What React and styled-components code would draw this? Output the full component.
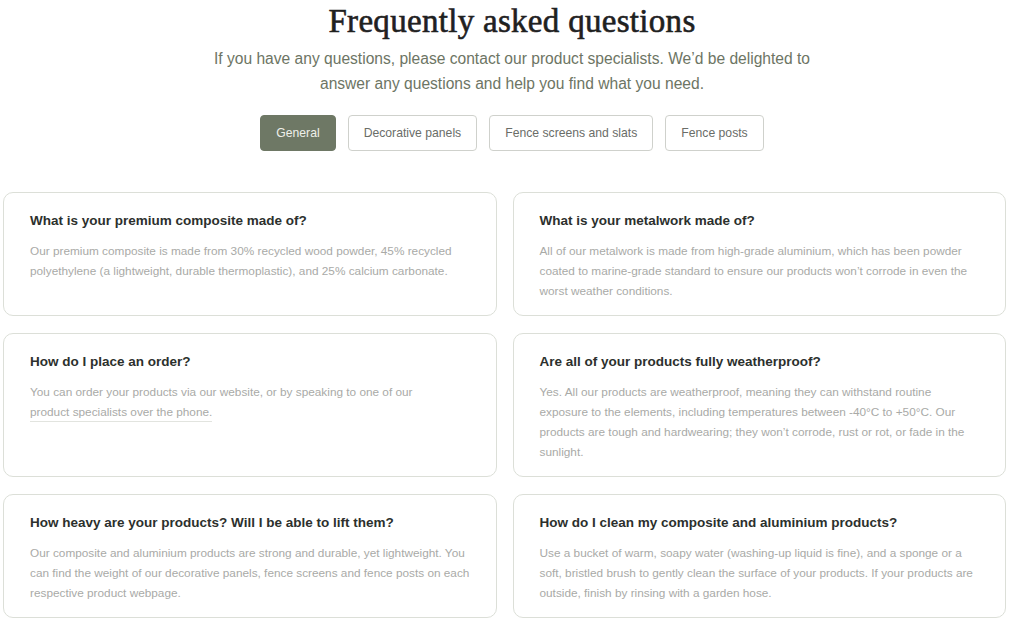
import React, { useState } from 'react';
import styled, { createGlobalStyle } from 'styled-components';

const tabs = ['General', 'Decorative panels', 'Fence screens and slats', 'Fence posts'];

const faqs = [
  {
    q: 'What is your premium composite made of?',
    a: 'Our premium composite is made from 30% recycled wood powder, 45% recycled polyethylene (a lightweight, durable thermoplastic), and 25% calcium carbonate.',
  },
  {
    q: 'What is your metalwork made of?',
    a: 'All of our metalwork is made from high-grade aluminium, which has been powder coated to marine-grade standard to ensure our products won\u2019t corrode in even the worst weather conditions.',
  },
  {
    q: 'How do I place an order?',
    a: 'You can order your products via our website, or by speaking to one of our ',
    link: 'product specialists over the phone.',
  },
  {
    q: 'Are all of your products fully weatherproof?',
    a: 'Yes. All our products are weatherproof, meaning they can withstand routine exposure to the elements, including temperatures between -40\u00b0C to +50\u00b0C. Our products are tough and hardwearing; they won\u2019t corrode, rust or rot, or fade in the sunlight.',
  },
  {
    q: 'How heavy are your products? Will I be able to lift them?',
    a: 'Our composite and aluminium products are strong and durable, yet lightweight. You can find the weight of our decorative panels, fence screens and fence posts on each respective product webpage.',
  },
  {
    q: 'How do I clean my composite and aluminium products?',
    a: 'Use a bucket of warm, soapy water (washing-up liquid is fine), and a sponge or a soft, bristled brush to gently clean the surface of your products. If your products are outside, finish by rinsing with a garden hose.',
  },
];

function App() {
  const [activeTab, setActiveTab] = useState('General');

  return (
    <>
      <GlobalStyle />
      <Page>
        <Header>
          <Title>Frequently asked questions</Title>
          <Intro>
            If you have any questions, please contact our product specialists. We’d be delighted to
            <br />
            answer any questions and help you find what you need.
          </Intro>
        </Header>
        <Tabs>
          {tabs.map((tab) => (
            <Tab key={tab} $active={activeTab === tab} onClick={() => setActiveTab(tab)}>
              {tab}
            </Tab>
          ))}
        </Tabs>
        <Grid>
          {faqs.map((item) => (
            <Card key={item.q}>
              <Question>{item.q}</Question>
              <Answer>
                {item.a}
                {item.link && <AnswerLink href="#">{item.link}</AnswerLink>}
              </Answer>
            </Card>
          ))}
        </Grid>
      </Page>
    </>
  );
}

const GlobalStyle = createGlobalStyle`
  html, body {
    margin: 0;
    padding: 0;
    background: #ffffff;
  }
  body {
    font-family: "Liberation Sans", Arial, sans-serif;
  }
  * {
    box-sizing: border-box;
  }
`;

const Page = styled.div`
  width: 1024px;
`;

const Header = styled.div`
  display: flex;
  flex-direction: column;
  align-items: center;
  text-align: center;
`;

const Title = styled.h1`
  margin: 0;
  padding-top: 2px;
  font-family: "Liberation Serif", "Times New Roman", serif;
  font-weight: 400;
  font-size: 33px;
  line-height: 38px;
  color: #1f211f;
  letter-spacing: 0.3px;
  -webkit-text-stroke: 0.6px #1f211f;
`;

const Intro = styled.p`
  margin: 6px 0 0;
  font-size: 15.6px;
  line-height: 25px;
  color: #6d7564;
`;

const Tabs = styled.div`
  display: flex;
  justify-content: center;
  gap: 12px;
  margin-top: 19px;
`;

const Tab = styled.button`
  height: 36px;
  padding: 0 15px;
  border-radius: 4px;
  font-family: "Liberation Sans", Arial, sans-serif;
  font-size: 12.2px;
  cursor: pointer;
  border: 1px solid ${(p) => (p.$active ? '#6e7865' : '#cfd1cc')};
  background: ${(p) => (p.$active ? '#6e7865' : '#ffffff')};
  color: ${(p) => (p.$active ? '#eef0ea' : '#6a6d68')};
`;

const Grid = styled.div`
  display: grid;
  grid-template-columns: 1fr 1fr;
  column-gap: 16px;
  row-gap: 17px;
  margin: 41px 18px 0 3px;
`;

const Card = styled.div`
  border: 1px solid #dcdfd8;
  border-radius: 10px;
  padding: 18px 26px 14px;
`;

const Question = styled.h3`
  margin: 0;
  font-size: 13.5px;
  line-height: 20px;
  font-weight: 700;
  color: #2c302d;
`;

const Answer = styled.p`
  margin: 10px 0 0;
  font-size: 11.8px;
  line-height: 20px;
  color: #a9aaa7;
`;

const AnswerLink = styled.a`
  display: inline-block;
  line-height: 18px;
  color: inherit;
  text-decoration: none;
  border-bottom: 1px solid #e2e4df;
`;

export default App;
